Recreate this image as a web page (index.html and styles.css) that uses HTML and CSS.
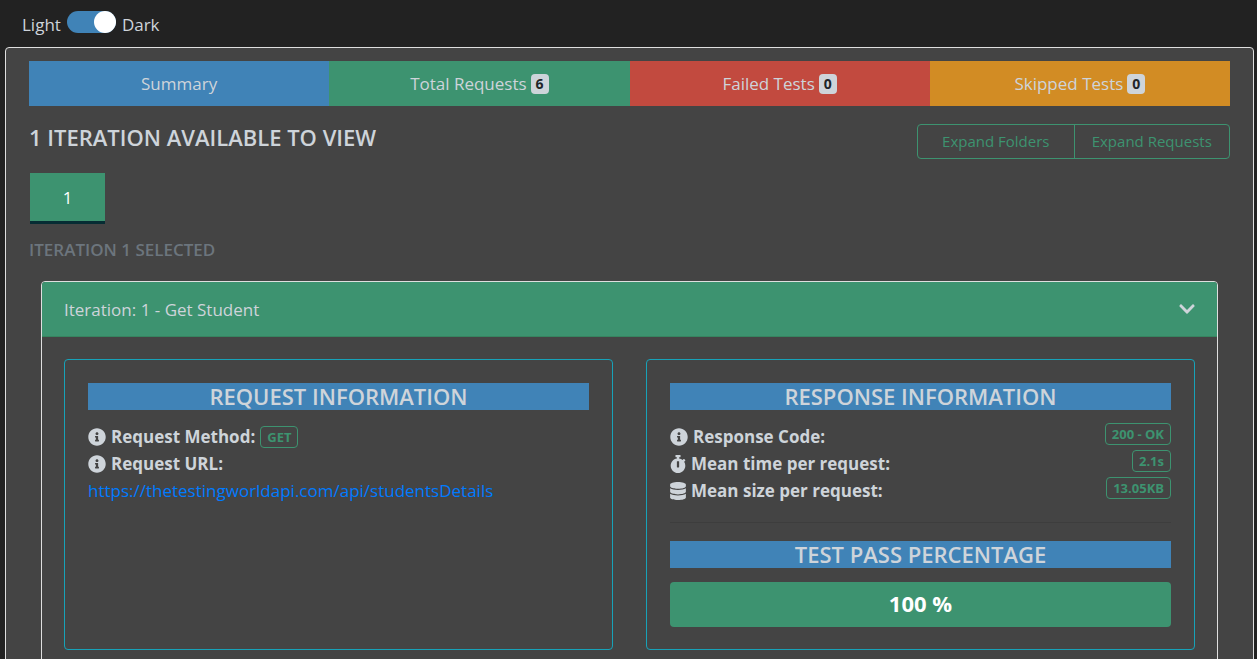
FILE: index.html
```html
<!DOCTYPE html>
<html lang="en">
<head>
<meta charset="utf-8">
<title>Test Run Dashboard</title>
<link rel="stylesheet" href="styles.css">
</head>
<body>
<div class="theme-switch">
  <label for="theme">Light</label>
  <input class="switch" type="checkbox" id="theme" checked>
  <label for="theme">Dark</label>
</div>
<main class="panel">
  <nav class="tabs">
    <a class="tab blue" href="#summary">Summary</a>
    <a class="tab green" href="#requests">Total Requests <span class="count">6</span></a>
    <a class="tab red" href="#failed">Failed Tests <span class="count">0</span></a>
    <a class="tab orange" href="#skipped">Skipped Tests <span class="count">0</span></a>
  </nav>
  <div class="toolbar">
    <h1 class="title">1 ITERATION AVAILABLE TO VIEW</h1>
    <div class="button-group">
      <button class="outline-button" type="button">Expand Folders</button>
      <button class="outline-button" type="button">Expand Requests</button>
    </div>
  </div>
  <button class="page-button" type="button">1</button>
  <h2 class="selected">ITERATION 1 SELECTED</h2>

  <section class="iteration">
    <a class="iteration-header" href="#iteration-1">
      <span>Iteration: 1 - Get Student</span>
      <svg class="chevron" viewBox="0 0 448 512" aria-hidden="true"><path fill="currentColor" d="M207.029 381.476L12.686 187.132c-9.373-9.373-9.373-24.569 0-33.941l22.667-22.667c9.357-9.357 24.522-9.375 33.901-.04L224 284.505l154.745-154.021c9.379-9.335 24.544-9.317 33.901.04l22.667 22.667c9.373 9.373 9.373 24.569 0 33.941L240.971 381.476c-9.373 9.372-24.569 9.372-33.942 0z"/></svg>
    </a>
    <div class="cards">
      <article class="card">
        <h3 class="banner">REQUEST INFORMATION</h3>
        <div class="row">
          <svg class="icon" viewBox="0 0 512 512" aria-hidden="true"><path fill="currentColor" d="M256 8C119.043 8 8 119.083 8 256c0 136.997 111.043 248 248 248s248-111.003 248-248C504 119.083 392.957 8 256 8zm0 110c23.196 0 42 18.804 42 42s-18.804 42-42 42-42-18.804-42-42 18.804-42 42-42zm56 254c0 6.627-5.373 12-12 12h-88c-6.627 0-12-5.373-12-12v-24c0-6.627 5.373-12 12-12h12v-64h-12c-6.627 0-12-5.373-12-12v-24c0-6.627 5.373-12 12-12h64c6.627 0 12 5.373 12 12v100h12c6.627 0 12 5.373 12 12v24z"/></svg>
          <strong>Request Method:</strong>
          <span class="badge">GET</span>
        </div>
        <div class="row">
          <svg class="icon" viewBox="0 0 512 512" aria-hidden="true"><path fill="currentColor" d="M256 8C119.043 8 8 119.083 8 256c0 136.997 111.043 248 248 248s248-111.003 248-248C504 119.083 392.957 8 256 8zm0 110c23.196 0 42 18.804 42 42s-18.804 42-42 42-42-18.804-42-42 18.804-42 42-42zm56 254c0 6.627-5.373 12-12 12h-88c-6.627 0-12-5.373-12-12v-24c0-6.627 5.373-12 12-12h12v-64h-12c-6.627 0-12-5.373-12-12v-24c0-6.627 5.373-12 12-12h64c6.627 0 12 5.373 12 12v100h12c6.627 0 12 5.373 12 12v24z"/></svg>
          <strong>Request URL:</strong>
        </div>
        <div class="row">
          <a class="url" href="#request-url">https://thetestingworldapi.com/api/studentsDetails</a>
        </div>
      </article>
      <article class="card">
        <h3 class="banner">RESPONSE INFORMATION</h3>
        <div class="row">
          <svg class="icon" viewBox="0 0 512 512" aria-hidden="true"><path fill="currentColor" d="M256 8C119.043 8 8 119.083 8 256c0 136.997 111.043 248 248 248s248-111.003 248-248C504 119.083 392.957 8 256 8zm0 110c23.196 0 42 18.804 42 42s-18.804 42-42 42-42-18.804-42-42 18.804-42 42-42zm56 254c0 6.627-5.373 12-12 12h-88c-6.627 0-12-5.373-12-12v-24c0-6.627 5.373-12 12-12h12v-64h-12c-6.627 0-12-5.373-12-12v-24c0-6.627 5.373-12 12-12h64c6.627 0 12 5.373 12 12v100h12c6.627 0 12 5.373 12 12v24z"/></svg>
          <strong>Response Code:</strong>
          <span class="badge end">200 - OK</span>
        </div>
        <div class="row">
          <svg class="icon narrow" viewBox="0 0 448 512" aria-hidden="true"><path fill="currentColor" d="M432 304c0 114.900-93.100 208-208 208S16 418.900 16 304c0-104 76.300-190.200 176-205.500V64h-28c-6.600 0-12-5.400-12-12V12c0-6.600 5.400-12 12-12h120c6.600 0 12 5.400 12 12v40c0 6.600-5.400 12-12 12h-28v34.500c37.500 5.800 71.700 21.600 99.700 44.600l27.500-27.500c4.700-4.700 12.300-4.700 17 0l28.300 28.300c4.700 4.700 4.700 12.300 0 17l-29.400 29.400-.6.600C419.700 223.300 432 262.200 432 304zm-176 36V188.500c0-6.600-5.400-12-12-12h-40c-6.600 0-12 5.400-12 12V340c0 6.600 5.400 12 12 12h40c6.600 0 12-5.400 12-12z"/></svg>
          <strong>Mean time per request:</strong>
          <span class="badge end">2.1s</span>
        </div>
        <div class="row">
          <svg class="icon narrow" viewBox="0 0 448 512" aria-hidden="true"><path fill="currentColor" d="M448 73.143v45.714C448 159.143 347.667 192 224 192S0 159.143 0 118.857V73.143C0 32.857 100.333 0 224 0s224 32.857 224 73.143zM448 176v102.857C448 319.143 347.667 352 224 352S0 319.143 0 278.857V176c48.125 33.143 136.208 48.572 224 48.572S399.874 209.143 448 176zm0 160v102.857C448 479.143 347.667 512 224 512S0 479.143 0 438.857V336c48.125 33.143 136.208 48.572 224 48.572S399.874 369.143 448 336z"/></svg>
          <strong>Mean size per request:</strong>
          <span class="badge end">13.05KB</span>
        </div>
        <hr class="divider">
        <h3 class="banner">TEST PASS PERCENTAGE</h3>
        <div class="percentage">100 %</div>
      </article>
    </div>
  </section>
</main>
</body>
</html>
```
FILE: styles.css
```css
* {
  box-sizing: border-box;
}

body {
  margin: 0;
  height: 100vh;
  overflow: hidden;
  background: #222;
  color: #ced4da;
  font-family: "Open Sans", "Noto Sans", sans-serif;
  font-size: 17px;
  line-height: 27px;
}

h1, h2, h3 {
  margin: 0;
  font-weight: 600;
}

a {
  color: inherit;
  text-decoration: none;
}

button {
  font: inherit;
}

.theme-switch {
  display: flex;
  align-items: center;
  gap: 6px;
  padding: 11px 22px 9px;
}

.switch {
  appearance: none;
  display: flex;
  justify-content: flex-end;
  width: 49px;
  height: 22px;
  margin: 0 0 5px;
  border-radius: 11px;
  background: #4083b7;
}

.switch::before {
  content: "";
  width: 22px;
  border-radius: 50%;
  background: #fff;
}

.panel {
  min-height: 100vh;
  margin: 0 3px 0 5px;
  padding: 13px 23px 24px;
  border: 1px solid #dfdfdf;
  border-radius: 4px;
  background: #444;
}

.tabs {
  display: grid;
  grid-template-columns: repeat(4, 1fr);
}

.tab {
  display: flex;
  align-items: center;
  justify-content: center;
  gap: 4px;
  height: 45px;
}

.blue { background: #4083b7; }
.green { background: #3d9370; }
.red { background: #c24a3f; }
.orange { background: #d28c24; }

.count {
  padding: 0 5px;
  border-radius: 4px;
  background: #ced4da;
  color: #212529;
  font-size: 14px;
  font-weight: 700;
  line-height: 20px;
}

.toolbar {
  display: flex;
  justify-content: space-between;
  margin-top: 18px;
}

.title {
  font-size: 22px;
}

.button-group {
  display: grid;
  grid-template-columns: 1fr 1fr;
  width: 313px;
  border: 1px solid #3d9370;
  border-radius: 4px;
}

.outline-button {
  padding: 3px 0;
  border: 0;
  background: none;
  color: #3d9370;
  font-size: 15px;
}

.outline-button + .outline-button {
  border-left: 1px solid #3d9370;
}

.page-button {
  display: block;
  width: 75px;
  height: 51px;
  margin: 14px 1px 12px;
  border: 0;
  border-bottom: 3px solid #062c33;
  background: #3d9370;
  color: #fff;
}

.selected {
  color: #6c757d;
  font-size: 17px;
}

.iteration {
  margin: 18px 12px 0;
  border: 1px solid #dfdfdf;
  border-radius: 4px;
}

.iteration-header {
  display: flex;
  align-items: center;
  justify-content: space-between;
  height: 55px;
  padding: 0 22px;
  border-bottom: 1px solid #37845f;
  border-radius: 3px 3px 0 0;
  background: #3d9370;
}

.chevron {
  width: 16px;
  height: 18px;
}

.cards {
  display: grid;
  grid-template-columns: 1fr 1fr;
  gap: 33px;
  padding: 22px;
}

.card {
  padding: 23px 23px 22px;
  border: 1px solid #17a2b8;
  border-radius: 4px;
}

.banner {
  margin-bottom: 13px;
  background: #4083b7;
  font-size: 22px;
  text-align: center;
}

.row {
  display: flex;
  align-items: center;
  gap: 5px;
  height: 27px;
}

.icon {
  width: 18px;
  height: 18px;
}

.icon.narrow {
  width: 16px;
}

.badge {
  padding: 0 6px;
  border: 1px solid #3d9370;
  border-radius: 4px;
  color: #3d9370;
  font-size: 13px;
  font-weight: 700;
  line-height: 20px;
}

.end {
  align-self: flex-start;
  margin-left: auto;
}

.url {
  color: #007bff;
}

.divider {
  margin: 18px 0;
  border: 0;
  border-top: 1px solid #3d3d3d;
}

.percentage {
  margin-top: 14px;
  padding: 8px 9px 10px;
  border-radius: 4px;
  background: #3d9370;
  color: #fff;
  font-size: 22px;
  font-weight: 700;
  text-align: center;
}
```
